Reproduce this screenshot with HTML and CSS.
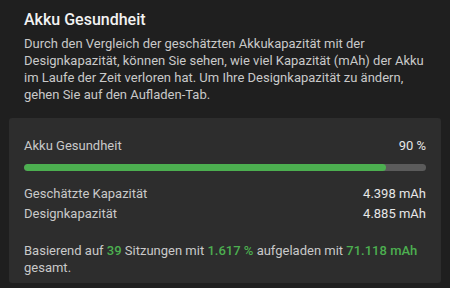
FILE: index.html
```html
<!DOCTYPE html>
<html lang="de">
<head>
    <meta charset="UTF-8">
    <meta name="viewport" content="width=device-width, initial-scale=1.0">
    <title>Akku Gesundheit</title>
    <link rel="stylesheet" href="styles.css">
</head>
<body>
<div class="section">
    <h2 class="title">Akku Gesundheit</h2>
    <p class="desc">Durch den Vergleich der geschätzten Akkukapazität mit der<br>
        Designkapazität, können Sie sehen, wie viel Kapazität (mAh) der Akku<br>
        im Laufe der Zeit verloren hat. Um Ihre Designkapazität zu ändern,<br>
        gehen Sie auf den Aufladen-Tab.</p>
</div>

<div class="card">
    <div class="row">
        <span>Akku Gesundheit</span>
        <span>90 %</span>
    </div>
    <div class="bar">
        <div class="bar-fill" style="width: 90%"></div>
    </div>

    <div class="row row-first">
        <span>Geschätzte Kapazität</span>
        <span>4.398 mAh</span>
    </div>
    <div class="row">
        <span>Designkapazität</span>
        <span>4.885 mAh</span>
    </div>

    <p class="summary">Basierend auf <b>39</b> Sitzungen mit <b>1.617 %</b> aufgeladen mit <b>71.118 mAh</b><br>
        gesamt.</p>
</div>
</body>
</html>
```

FILE: styles.css
```css
body {
    font-family: Roboto, "Noto Sans", sans-serif;
    margin: 0;
    background-color: #1f1f1f;
    color: #c9c9c9;
}
.section {
    padding: 9px 24px 0 24px;
}
.title {
    margin: 0;
    font-size: 16px;
    font-weight: 500;
    color: #f2f2f2;
    line-height: 22px;
}
.desc {
    margin: 4px 0 0 0;
    font-size: 13px;
    line-height: 17px;
    white-space: nowrap;
}
.card {
    margin: 15px 9px 0 9px;
    padding: 18px 15px 7px 15px;
    background-color: #2d2d2d;
    border-radius: 3px;
    font-size: 13px;
}
.row {
    display: flex;
    justify-content: space-between;
    line-height: 20px;
}
.row span:last-child {
    color: #e6e6e6;
}
.row-first {
    margin-top: 13px;
}
.bar {
    height: 7px;
    margin-top: 8px;
    background-color: #5b5b5b;
    border-radius: 4px;
    overflow: hidden;
}
.bar-fill {
    height: 100%;
    background-color: #4caf50;
    border-radius: 4px;
}
.summary {
    margin: 18px 0 0 0;
    line-height: 17px;
    white-space: nowrap;
}
.summary b {
    color: #4caf50;
    font-weight: 500;
}
```
